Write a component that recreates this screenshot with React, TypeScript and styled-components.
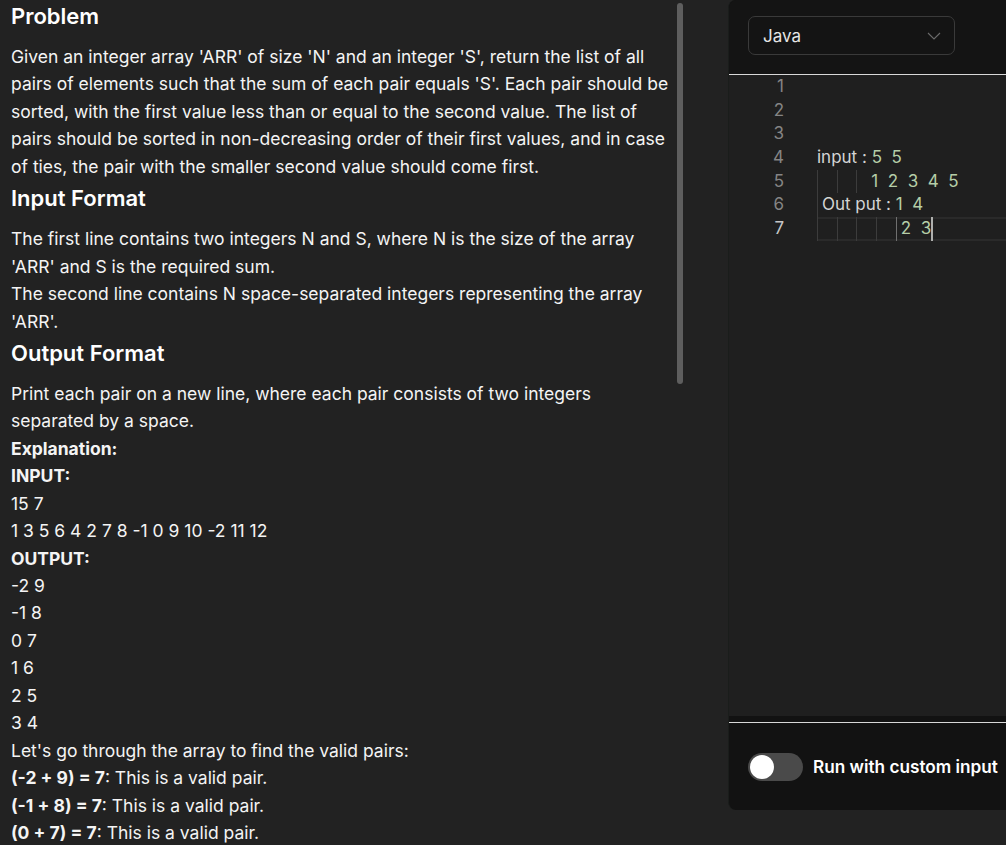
import React from "react";
import styled, { createGlobalStyle } from "styled-components";

const GlobalStyle = createGlobalStyle`
  html, body {
    margin: 0;
    padding: 0;
    background: #222222;
    overflow: hidden;
  }
  body {
    font-family: Inter, "Noto Sans", sans-serif;
    -webkit-font-smoothing: antialiased;
  }
`;

const Page = styled.div`
  display: flex;
  align-items: flex-start;
  width: 1006px;
  height: 845px;
  overflow: hidden;
  background: #222222;
`;

const Description = styled.section`
  position: relative;
  flex: 0 0 686px;
  box-sizing: border-box;
  height: 845px;
  padding: 0 12px 0 11px;
  color: #f4f4f4;
  font-size: 17.5px;
  line-height: 27.43px;
  overflow: hidden;
`;

const ScrollThumb = styled.div`
  position: absolute;
  top: 3px;
  right: 3px;
  width: 6px;
  height: 381px;
  border-radius: 3px;
  background: #5e5e5e;
`;

const Heading = styled.h2<{ $first?: boolean }>`
  margin: ${(p) => (p.$first ? "2px" : "4px")} 0 13px;
  font-size: 22px;
  line-height: 28px;
  font-weight: 600;
  color: #ffffff;
`;

const Para = styled.p`
  margin: 0;
`;

const Line = styled.div`
  white-space: nowrap;
`;

const Strong = styled.strong`
  font-weight: 700;
`;

const EditorPanel = styled.aside`
  flex: 0 0 300px;
  margin-left: 42px;
  height: 810px;
  display: flex;
  flex-direction: column;
  border-radius: 8px;
  overflow: hidden;
  background: #121212;
  border-left: 1px solid #1a1d1b;
  box-sizing: border-box;
`;

const Header = styled.div`
  height: 74px;
  box-sizing: border-box;
  padding: 16px 0 0 19px;
  background: #141414;
`;

const Select = styled.div`
  width: 207px;
  height: 39px;
  box-sizing: border-box;
  display: flex;
  align-items: center;
  justify-content: space-between;
  padding: 0 13px 0 14px;
  border: 1px solid #3a3a3a;
  border-radius: 7px;
  color: #e6e6e6;
  font-size: 17px;
`;

const Divider = styled.div`
  height: 1px;
  background: #d8d8d8;
  flex: 0 0 1px;
`;

const CodeArea = styled.div`
  flex: 0 0 641px;
  background: #1f1f1f;
  display: flex;
  flex-direction: column;
`;

const CodeRow = styled.div`
  display: grid;
  grid-template-columns: 55px 1fr;
  column-gap: 33px;
  height: 23.67px;
  line-height: 23.67px;
  font-size: 17px;
`;

const LineNo = styled.span<{ $active?: boolean }>`
  text-align: right;
  color: ${(p) => (p.$active ? "#c6c6c6" : "#858585")};
`;

const CodeCell = styled.span<{ $active?: boolean }>`
  display: flex;
  align-items: stretch;
  white-space: pre;
  color: #d4d4d4;
  box-sizing: border-box;
  ${(p) =>
    p.$active
      ? "box-shadow: inset 0 2px 0 #2a2a2a, inset 0 -2px 0 #2a2a2a;"
      : ""}
`;

const Guide = styled.span<{ $w: number; $active?: boolean }>`
  flex: 0 0 ${(p) => p.$w}px;
  border-left: 1px solid ${(p) => (p.$active ? "#6f6f6f" : "#3c3c3c")};
  box-sizing: border-box;
`;

const Num = styled.span`
  color: #b5cea8;
`;

const Cursor = styled.span`
  display: inline-block;
  width: 2px;
  align-self: stretch;
  background: #aeafad;
`;

const Gap = styled.div`
  flex: 0 0 6px;
`;

const Footer = styled.div`
  flex: 0 0 87px;
  display: flex;
  align-items: center;
  gap: 10px;
  padding: 0 19px;
`;

const Toggle = styled.div`
  width: 55px;
  height: 28px;
  box-sizing: border-box;
  padding: 2px;
  border-radius: 14px;
  background: #4a4a4a;
  display: flex;
  align-items: center;
`;

const Knob = styled.div`
  width: 24px;
  height: 24px;
  border-radius: 50%;
  background: #ffffff;
`;

const ToggleLabel = styled.span`
  color: #ffffff;
  font-size: 17.2px;
  font-weight: 600;
  white-space: nowrap;
`;

const SP = 4.93;

type Seg = { t: string; num?: boolean };
type CodeLine = { indent: number; segs: Seg[]; active?: boolean; cursor?: boolean; activeGuide?: number };

const code: CodeLine[] = [
  { indent: 0, segs: [] },
  { indent: 0, segs: [] },
  { indent: 0, segs: [] },
  { indent: 0, segs: [{ t: "input : " }, { t: "5  5", num: true }] },
  { indent: 11, segs: [{ t: "1  2  3  4  5", num: true }] },
  { indent: 1, segs: [{ t: "Out put : " }, { t: "1  4", num: true }] },
  { indent: 17, segs: [{ t: "2  3", num: true }], active: true, cursor: true, activeGuide: 4 },
];

function guidesFor(indent: number, activeGuide?: number) {
  const out: { w: number; active: boolean }[] = [];
  let remaining = indent;
  let level = 0;
  while (remaining > 0) {
    const spaces = Math.min(4, remaining);
    out.push({ w: spaces * SP, active: activeGuide === level });
    remaining -= spaces;
    level++;
  }
  return out;
}

const Chevron = () => (
  <svg width="14" height="8" viewBox="0 0 14 8" fill="none">
    <polyline points="1,1 7,7 13,1" stroke="#6b6b6b" strokeWidth="1.1" />
  </svg>
);

export default function App() {
  return (
    <>
      <GlobalStyle />
      <Page>
        <Description>
          <Heading $first>Problem</Heading>
          <Para>
            Given an integer array 'ARR' of size 'N' and an integer 'S', return the list of all pairs of
            elements such that the sum of each pair equals 'S'. Each pair should be sorted, with the first
            value less than or equal to the second value. The list of pairs should be sorted in
            non-decreasing order of their first values, and in case of ties, the pair with the smaller
            second value should come first.
          </Para>
          <Heading>Input Format</Heading>
          <Para>
            The first line contains two integers N and S, where N is the size of the array 'ARR' and S is
            the required sum.
          </Para>
          <Para>The second line contains N space-separated integers representing the array 'ARR'.</Para>
          <Heading>Output Format</Heading>
          <Para>
            Print each pair on a new line, where each pair consists of two integers
            <br />
            separated by a space.
          </Para>
          <Line>
            <Strong>Explanation:</Strong>
          </Line>
          <Line>
            <Strong>INPUT:</Strong>
          </Line>
          <Line>15 7</Line>
          <Line>1 3 5 6 4 2 7 8 -1 0 9 10 -2 11 12</Line>
          <Line>
            <Strong>OUTPUT:</Strong>
          </Line>
          <Line>-2 9</Line>
          <Line>-1 8</Line>
          <Line>0 7</Line>
          <Line>1 6</Line>
          <Line>2 5</Line>
          <Line>3 4</Line>
          <Line>Let's go through the array to find the valid pairs:</Line>
          <Line>
            <Strong>(-2 + 9) = 7</Strong>: This is a valid pair.
          </Line>
          <Line>
            <Strong>(-1 + 8) = 7</Strong>: This is a valid pair.
          </Line>
          <Line>
            <Strong>(0 + 7) = 7</Strong>: This is a valid pair.
          </Line>
          <ScrollThumb />
        </Description>

        <EditorPanel>
          <Header>
            <Select>
              <span>Java</span>
              <Chevron />
            </Select>
          </Header>
          <Divider />
          <CodeArea>
            {code.map((l, i) => (
              <CodeRow key={i}>
                <LineNo $active={l.active}>{i + 1}</LineNo>
                <CodeCell $active={l.active}>
                  {guidesFor(l.indent, l.activeGuide).map((g, j) => (
                    <Guide key={j} $w={g.w} $active={g.active} />
                  ))}
                  {l.segs.map((s, j) => (s.num ? <Num key={j}>{s.t}</Num> : <span key={j}>{s.t}</span>))}
                  {l.cursor && <Cursor />}
                </CodeCell>
              </CodeRow>
            ))}
          </CodeArea>
          <Gap />
          <Divider />
          <Footer>
            <Toggle>
              <Knob />
            </Toggle>
            <ToggleLabel>Run with custom input</ToggleLabel>
          </Footer>
        </EditorPanel>
      </Page>
    </>
  );
}
